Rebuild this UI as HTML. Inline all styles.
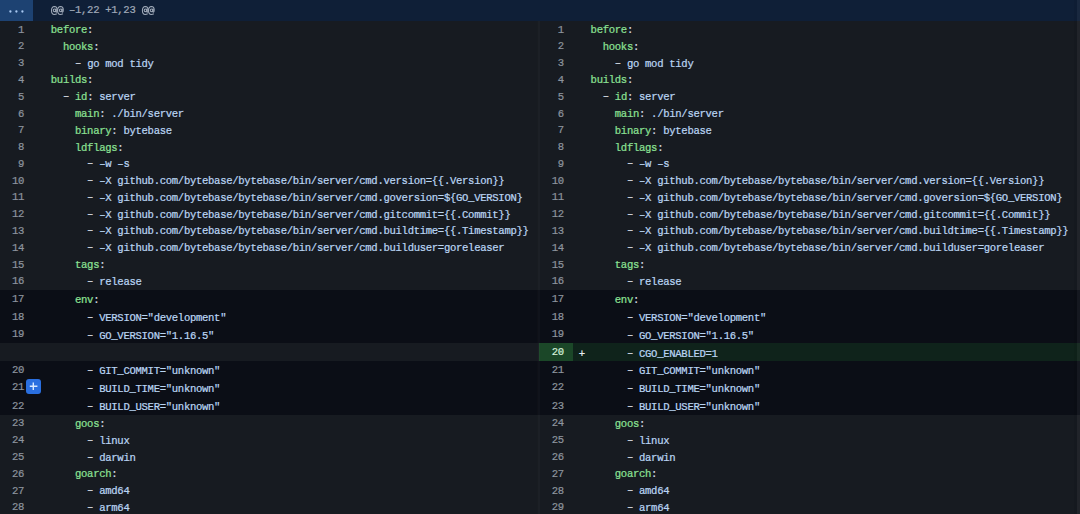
<!DOCTYPE html>
<html><head><meta charset="utf-8"><style>
html,body{margin:0;padding:0;}
body{width:1080px;height:514px;overflow:hidden;position:relative;background:#171b21;font-family:"Liberation Mono",monospace;font-size:10.6px;letter-spacing:-0.31px;-webkit-text-stroke:0.22px;}
.row{position:absolute;left:0;width:1080px;}
.num{position:absolute;text-align:right;color:#8d949e;white-space:pre;transform:scaleY(1.1);}
.addn{color:#d3efd9;}
.code{position:absolute;color:#d5dbe2;white-space:pre;transform:scaleY(1.1);}
.k{color:#8ce194;}
.s{color:#bad5f3;}
.d{color:#d5dbe2;position:relative;top:-0.8px;}
.hunk{position:absolute;left:0;top:0;width:1080px;height:21.0px;background:#0f1f37;}
.exp{position:absolute;left:0;top:0;width:33.2px;height:21.0px;background:#1d4272;}
.divider{position:absolute;left:537px;top:21.0px;width:3.2px;height:600px;background:rgba(255,255,255,0.022);}
.divl{position:absolute;left:536.5px;top:21.0px;width:1px;height:600px;background:rgba(0,0,0,0.12);}
.redge{position:absolute;left:1077px;top:0;width:3px;height:600px;background:rgba(255,255,255,0.045);}
.redge2{position:absolute;left:1074px;top:0;width:3px;height:600px;background:rgba(0,0,0,0.05);}
.plusbtn{position:absolute;left:26.4px;top:379.3px;width:14.6px;height:14.6px;border-radius:3px;background:#2a6fe0;}
</style></head><body>
<div class="row" style="top:21.500px;height:16.780px;background:#171b21"></div><div class="row" style="top:38.280px;height:16.780px;background:#171b21"></div><div class="row" style="top:55.060px;height:16.780px;background:#171b21"></div><div class="row" style="top:71.840px;height:16.780px;background:#171b21"></div><div class="row" style="top:88.620px;height:16.780px;background:#171b21"></div><div class="row" style="top:105.400px;height:16.780px;background:#171b21"></div><div class="row" style="top:122.180px;height:16.780px;background:#171b21"></div><div class="row" style="top:138.960px;height:16.780px;background:#171b21"></div><div class="row" style="top:155.740px;height:16.780px;background:#171b21"></div><div class="row" style="top:172.520px;height:16.780px;background:#171b21"></div><div class="row" style="top:189.300px;height:16.780px;background:#171b21"></div><div class="row" style="top:206.080px;height:16.780px;background:#171b21"></div><div class="row" style="top:222.860px;height:16.780px;background:#171b21"></div><div class="row" style="top:239.640px;height:16.780px;background:#171b21"></div><div class="row" style="top:256.420px;height:16.780px;background:#171b21"></div><div class="row" style="top:273.200px;height:16.780px;background:#171b21"></div><div class="row" style="top:289.980px;height:17.740px;background:#0b0e16"></div><div class="row" style="top:307.720px;height:17.740px;background:#0b0e16"></div><div class="row" style="top:325.460px;height:17.740px;background:#0b0e16"></div><div class="row" style="top:343.200px;height:17.740px;background:#0b0e16"></div><div class="row" style="top:360.940px;height:17.740px;background:#0b0e16"></div><div class="row" style="top:378.680px;height:17.740px;background:#0b0e16"></div><div class="row" style="top:396.420px;height:18.940px;background:#0b0e16"></div><div class="row" style="top:415.360px;height:16.780px;background:#171b21"></div><div class="row" style="top:432.140px;height:16.780px;background:#171b21"></div><div class="row" style="top:448.920px;height:16.780px;background:#171b21"></div><div class="row" style="top:465.700px;height:16.780px;background:#171b21"></div><div class="row" style="top:482.480px;height:16.780px;background:#171b21"></div><div class="row" style="top:499.260px;height:16.780px;background:#171b21"></div><div class="num" style="left:0;width:24.0px;top:21.600px;line-height:16.780px;height:16.780px">1</div><div class="code" style="left:50.8px;top:22.100px;line-height:16.780px;height:16.780px"><span class="k">before</span>:</div><div class="num" style="left:539.8px;width:24.0px;top:21.600px;line-height:16.780px;height:16.780px">1</div><div class="code" style="left:590.5999999999999px;top:22.100px;line-height:16.780px;height:16.780px"><span class="k">before</span>:</div><div class="num" style="left:0;width:24.0px;top:38.380px;line-height:16.780px;height:16.780px">2</div><div class="code" style="left:50.8px;top:38.880px;line-height:16.780px;height:16.780px">  <span class="k">hooks</span>:</div><div class="num" style="left:539.8px;width:24.0px;top:38.380px;line-height:16.780px;height:16.780px">2</div><div class="code" style="left:590.5999999999999px;top:38.880px;line-height:16.780px;height:16.780px">  <span class="k">hooks</span>:</div><div class="num" style="left:0;width:24.0px;top:55.160px;line-height:16.780px;height:16.780px">3</div><div class="code" style="left:50.8px;top:55.660px;line-height:16.780px;height:16.780px">    <span class="d">&#8211;</span> <span class="s">go mod tidy</span></div><div class="num" style="left:539.8px;width:24.0px;top:55.160px;line-height:16.780px;height:16.780px">3</div><div class="code" style="left:590.5999999999999px;top:55.660px;line-height:16.780px;height:16.780px">    <span class="d">&#8211;</span> <span class="s">go mod tidy</span></div><div class="num" style="left:0;width:24.0px;top:71.940px;line-height:16.780px;height:16.780px">4</div><div class="code" style="left:50.8px;top:72.440px;line-height:16.780px;height:16.780px"><span class="k">builds</span>:</div><div class="num" style="left:539.8px;width:24.0px;top:71.940px;line-height:16.780px;height:16.780px">4</div><div class="code" style="left:590.5999999999999px;top:72.440px;line-height:16.780px;height:16.780px"><span class="k">builds</span>:</div><div class="num" style="left:0;width:24.0px;top:88.720px;line-height:16.780px;height:16.780px">5</div><div class="code" style="left:50.8px;top:89.220px;line-height:16.780px;height:16.780px">  <span class="d">&#8211;</span> <span class="k">id</span>: <span class="s">server</span></div><div class="num" style="left:539.8px;width:24.0px;top:88.720px;line-height:16.780px;height:16.780px">5</div><div class="code" style="left:590.5999999999999px;top:89.220px;line-height:16.780px;height:16.780px">  <span class="d">&#8211;</span> <span class="k">id</span>: <span class="s">server</span></div><div class="num" style="left:0;width:24.0px;top:105.500px;line-height:16.780px;height:16.780px">6</div><div class="code" style="left:50.8px;top:106.000px;line-height:16.780px;height:16.780px">    <span class="k">main</span>: <span class="s">./bin/server</span></div><div class="num" style="left:539.8px;width:24.0px;top:105.500px;line-height:16.780px;height:16.780px">6</div><div class="code" style="left:590.5999999999999px;top:106.000px;line-height:16.780px;height:16.780px">    <span class="k">main</span>: <span class="s">./bin/server</span></div><div class="num" style="left:0;width:24.0px;top:122.280px;line-height:16.780px;height:16.780px">7</div><div class="code" style="left:50.8px;top:122.780px;line-height:16.780px;height:16.780px">    <span class="k">binary</span>: <span class="s">bytebase</span></div><div class="num" style="left:539.8px;width:24.0px;top:122.280px;line-height:16.780px;height:16.780px">7</div><div class="code" style="left:590.5999999999999px;top:122.780px;line-height:16.780px;height:16.780px">    <span class="k">binary</span>: <span class="s">bytebase</span></div><div class="num" style="left:0;width:24.0px;top:139.060px;line-height:16.780px;height:16.780px">8</div><div class="code" style="left:50.8px;top:139.560px;line-height:16.780px;height:16.780px">    <span class="k">ldflags</span>:</div><div class="num" style="left:539.8px;width:24.0px;top:139.060px;line-height:16.780px;height:16.780px">8</div><div class="code" style="left:590.5999999999999px;top:139.560px;line-height:16.780px;height:16.780px">    <span class="k">ldflags</span>:</div><div class="num" style="left:0;width:24.0px;top:155.840px;line-height:16.780px;height:16.780px">9</div><div class="code" style="left:50.8px;top:156.340px;line-height:16.780px;height:16.780px">      <span class="d">&#8211;</span> <span class="s">&#8211;w &#8211;s</span></div><div class="num" style="left:539.8px;width:24.0px;top:155.840px;line-height:16.780px;height:16.780px">9</div><div class="code" style="left:590.5999999999999px;top:156.340px;line-height:16.780px;height:16.780px">      <span class="d">&#8211;</span> <span class="s">&#8211;w &#8211;s</span></div><div class="num" style="left:0;width:24.0px;top:172.620px;line-height:16.780px;height:16.780px">10</div><div class="code" style="left:50.8px;top:173.120px;line-height:16.780px;height:16.780px">      <span class="d">&#8211;</span> <span class="s">&#8211;X github.com/bytebase/bytebase/bin/server/cmd.version={{.Version}}</span></div><div class="num" style="left:539.8px;width:24.0px;top:172.620px;line-height:16.780px;height:16.780px">10</div><div class="code" style="left:590.5999999999999px;top:173.120px;line-height:16.780px;height:16.780px">      <span class="d">&#8211;</span> <span class="s">&#8211;X github.com/bytebase/bytebase/bin/server/cmd.version={{.Version}}</span></div><div class="num" style="left:0;width:24.0px;top:189.400px;line-height:16.780px;height:16.780px">11</div><div class="code" style="left:50.8px;top:189.900px;line-height:16.780px;height:16.780px">      <span class="d">&#8211;</span> <span class="s">&#8211;X github.com/bytebase/bytebase/bin/server/cmd.goversion=${GO_VERSION}</span></div><div class="num" style="left:539.8px;width:24.0px;top:189.400px;line-height:16.780px;height:16.780px">11</div><div class="code" style="left:590.5999999999999px;top:189.900px;line-height:16.780px;height:16.780px">      <span class="d">&#8211;</span> <span class="s">&#8211;X github.com/bytebase/bytebase/bin/server/cmd.goversion=${GO_VERSION}</span></div><div class="num" style="left:0;width:24.0px;top:206.180px;line-height:16.780px;height:16.780px">12</div><div class="code" style="left:50.8px;top:206.680px;line-height:16.780px;height:16.780px">      <span class="d">&#8211;</span> <span class="s">&#8211;X github.com/bytebase/bytebase/bin/server/cmd.gitcommit={{.Commit}}</span></div><div class="num" style="left:539.8px;width:24.0px;top:206.180px;line-height:16.780px;height:16.780px">12</div><div class="code" style="left:590.5999999999999px;top:206.680px;line-height:16.780px;height:16.780px">      <span class="d">&#8211;</span> <span class="s">&#8211;X github.com/bytebase/bytebase/bin/server/cmd.gitcommit={{.Commit}}</span></div><div class="num" style="left:0;width:24.0px;top:222.960px;line-height:16.780px;height:16.780px">13</div><div class="code" style="left:50.8px;top:223.460px;line-height:16.780px;height:16.780px">      <span class="d">&#8211;</span> <span class="s">&#8211;X github.com/bytebase/bytebase/bin/server/cmd.buildtime={{.Timestamp}}</span></div><div class="num" style="left:539.8px;width:24.0px;top:222.960px;line-height:16.780px;height:16.780px">13</div><div class="code" style="left:590.5999999999999px;top:223.460px;line-height:16.780px;height:16.780px">      <span class="d">&#8211;</span> <span class="s">&#8211;X github.com/bytebase/bytebase/bin/server/cmd.buildtime={{.Timestamp}}</span></div><div class="num" style="left:0;width:24.0px;top:239.740px;line-height:16.780px;height:16.780px">14</div><div class="code" style="left:50.8px;top:240.240px;line-height:16.780px;height:16.780px">      <span class="d">&#8211;</span> <span class="s">&#8211;X github.com/bytebase/bytebase/bin/server/cmd.builduser=goreleaser</span></div><div class="num" style="left:539.8px;width:24.0px;top:239.740px;line-height:16.780px;height:16.780px">14</div><div class="code" style="left:590.5999999999999px;top:240.240px;line-height:16.780px;height:16.780px">      <span class="d">&#8211;</span> <span class="s">&#8211;X github.com/bytebase/bytebase/bin/server/cmd.builduser=goreleaser</span></div><div class="num" style="left:0;width:24.0px;top:256.520px;line-height:16.780px;height:16.780px">15</div><div class="code" style="left:50.8px;top:257.020px;line-height:16.780px;height:16.780px">    <span class="k">tags</span>:</div><div class="num" style="left:539.8px;width:24.0px;top:256.520px;line-height:16.780px;height:16.780px">15</div><div class="code" style="left:590.5999999999999px;top:257.020px;line-height:16.780px;height:16.780px">    <span class="k">tags</span>:</div><div class="num" style="left:0;width:24.0px;top:273.300px;line-height:16.780px;height:16.780px">16</div><div class="code" style="left:50.8px;top:273.800px;line-height:16.780px;height:16.780px">      <span class="d">&#8211;</span> <span class="s">release</span></div><div class="num" style="left:539.8px;width:24.0px;top:273.300px;line-height:16.780px;height:16.780px">16</div><div class="code" style="left:590.5999999999999px;top:273.800px;line-height:16.780px;height:16.780px">      <span class="d">&#8211;</span> <span class="s">release</span></div><div class="num" style="left:0;width:24.0px;top:290.780px;line-height:17.740px;height:17.740px">17</div><div class="code" style="left:50.8px;top:292.380px;line-height:17.740px;height:17.740px">    <span class="k">env</span>:</div><div class="num" style="left:539.8px;width:24.0px;top:290.780px;line-height:17.740px;height:17.740px">17</div><div class="code" style="left:590.5999999999999px;top:292.380px;line-height:17.740px;height:17.740px">    <span class="k">env</span>:</div><div class="num" style="left:0;width:24.0px;top:308.520px;line-height:17.740px;height:17.740px">18</div><div class="code" style="left:50.8px;top:310.120px;line-height:17.740px;height:17.740px">      <span class="d">&#8211;</span> <span class="s">VERSION=&quot;development&quot;</span></div><div class="num" style="left:539.8px;width:24.0px;top:308.520px;line-height:17.740px;height:17.740px">18</div><div class="code" style="left:590.5999999999999px;top:310.120px;line-height:17.740px;height:17.740px">      <span class="d">&#8211;</span> <span class="s">VERSION=&quot;development&quot;</span></div><div class="num" style="left:0;width:24.0px;top:326.260px;line-height:17.740px;height:17.740px">19</div><div class="code" style="left:50.8px;top:327.860px;line-height:17.740px;height:17.740px">      <span class="d">&#8211;</span> <span class="s">GO_VERSION=&quot;1.16.5&quot;</span></div><div class="num" style="left:539.8px;width:24.0px;top:326.260px;line-height:17.740px;height:17.740px">19</div><div class="code" style="left:590.5999999999999px;top:327.860px;line-height:17.740px;height:17.740px">      <span class="d">&#8211;</span> <span class="s">GO_VERSION=&quot;1.16.5&quot;</span></div><div class="row" style="left:0;width:539.8px;top:343.200px;height:17.740px;background:#171b21"></div><div class="row" style="left:539.3px;width:33.5px;top:343.200px;height:17.740px;background:#1b4728"></div><div class="row" style="left:572.8px;width:507.20000000000005px;top:343.200px;height:17.740px;background:#0f231b"></div><div class="num addn" style="left:539.8px;width:24.0px;top:344.000px;line-height:17.740px;height:17.740px">20</div><div class="code" style="left:590.5999999999999px;top:345.600px;line-height:17.740px;height:17.740px">      <span class="d">&#8211;</span> <span class="s">CGO_ENABLED=1</span></div><div class="code" style="left:578.8px;top:345.600px;line-height:17.740px;height:17.740px;color:#e6edf3">+</div><div class="num" style="left:0;width:24.0px;top:361.740px;line-height:17.740px;height:17.740px">20</div><div class="code" style="left:50.8px;top:363.340px;line-height:17.740px;height:17.740px">      <span class="d">&#8211;</span> <span class="s">GIT_COMMIT=&quot;unknown&quot;</span></div><div class="num" style="left:539.8px;width:24.0px;top:361.740px;line-height:17.740px;height:17.740px">21</div><div class="code" style="left:590.5999999999999px;top:363.340px;line-height:17.740px;height:17.740px">      <span class="d">&#8211;</span> <span class="s">GIT_COMMIT=&quot;unknown&quot;</span></div><div class="num" style="left:0;width:24.0px;top:379.480px;line-height:17.740px;height:17.740px">21</div><div class="code" style="left:50.8px;top:381.080px;line-height:17.740px;height:17.740px">      <span class="d">&#8211;</span> <span class="s">BUILD_TIME=&quot;unknown&quot;</span></div><div class="num" style="left:539.8px;width:24.0px;top:379.480px;line-height:17.740px;height:17.740px">22</div><div class="code" style="left:590.5999999999999px;top:381.080px;line-height:17.740px;height:17.740px">      <span class="d">&#8211;</span> <span class="s">BUILD_TIME=&quot;unknown&quot;</span></div><div class="num" style="left:0;width:24.0px;top:396.620px;line-height:18.940px;height:18.940px">22</div><div class="code" style="left:50.8px;top:398.220px;line-height:18.940px;height:18.940px">      <span class="d">&#8211;</span> <span class="s">BUILD_USER=&quot;unknown&quot;</span></div><div class="num" style="left:539.8px;width:24.0px;top:396.620px;line-height:18.940px;height:18.940px">23</div><div class="code" style="left:590.5999999999999px;top:398.220px;line-height:18.940px;height:18.940px">      <span class="d">&#8211;</span> <span class="s">BUILD_USER=&quot;unknown&quot;</span></div><div class="num" style="left:0;width:24.0px;top:415.460px;line-height:16.780px;height:16.780px">23</div><div class="code" style="left:50.8px;top:415.960px;line-height:16.780px;height:16.780px">    <span class="k">goos</span>:</div><div class="num" style="left:539.8px;width:24.0px;top:415.460px;line-height:16.780px;height:16.780px">24</div><div class="code" style="left:590.5999999999999px;top:415.960px;line-height:16.780px;height:16.780px">    <span class="k">goos</span>:</div><div class="num" style="left:0;width:24.0px;top:432.240px;line-height:16.780px;height:16.780px">24</div><div class="code" style="left:50.8px;top:432.740px;line-height:16.780px;height:16.780px">      <span class="d">&#8211;</span> <span class="s">linux</span></div><div class="num" style="left:539.8px;width:24.0px;top:432.240px;line-height:16.780px;height:16.780px">25</div><div class="code" style="left:590.5999999999999px;top:432.740px;line-height:16.780px;height:16.780px">      <span class="d">&#8211;</span> <span class="s">linux</span></div><div class="num" style="left:0;width:24.0px;top:449.020px;line-height:16.780px;height:16.780px">25</div><div class="code" style="left:50.8px;top:449.520px;line-height:16.780px;height:16.780px">      <span class="d">&#8211;</span> <span class="s">darwin</span></div><div class="num" style="left:539.8px;width:24.0px;top:449.020px;line-height:16.780px;height:16.780px">26</div><div class="code" style="left:590.5999999999999px;top:449.520px;line-height:16.780px;height:16.780px">      <span class="d">&#8211;</span> <span class="s">darwin</span></div><div class="num" style="left:0;width:24.0px;top:465.800px;line-height:16.780px;height:16.780px">26</div><div class="code" style="left:50.8px;top:466.300px;line-height:16.780px;height:16.780px">    <span class="k">goarch</span>:</div><div class="num" style="left:539.8px;width:24.0px;top:465.800px;line-height:16.780px;height:16.780px">27</div><div class="code" style="left:590.5999999999999px;top:466.300px;line-height:16.780px;height:16.780px">    <span class="k">goarch</span>:</div><div class="num" style="left:0;width:24.0px;top:482.580px;line-height:16.780px;height:16.780px">27</div><div class="code" style="left:50.8px;top:483.080px;line-height:16.780px;height:16.780px">      <span class="d">&#8211;</span> <span class="s">amd64</span></div><div class="num" style="left:539.8px;width:24.0px;top:482.580px;line-height:16.780px;height:16.780px">28</div><div class="code" style="left:590.5999999999999px;top:483.080px;line-height:16.780px;height:16.780px">      <span class="d">&#8211;</span> <span class="s">amd64</span></div><div class="num" style="left:0;width:24.0px;top:499.360px;line-height:16.780px;height:16.780px">28</div><div class="code" style="left:50.8px;top:499.860px;line-height:16.780px;height:16.780px">      <span class="d">&#8211;</span> <span class="s">arm64</span></div><div class="num" style="left:539.8px;width:24.0px;top:499.360px;line-height:16.780px;height:16.780px">29</div><div class="code" style="left:590.5999999999999px;top:499.860px;line-height:16.780px;height:16.780px">      <span class="d">&#8211;</span> <span class="s">arm64</span></div>
<div class="hunk"></div>
<div class="exp"><svg width="33" height="21" style="position:absolute;left:0;top:0"><circle cx="10.4" cy="11.5" r="1.15" fill="#a9c9f2"/><circle cx="16.4" cy="11.5" r="1.15" fill="#a9c9f2"/><circle cx="22.4" cy="11.5" r="1.15" fill="#a9c9f2"/></svg></div>
<div class="code" style="left:50.8px;top:0.2px;line-height:21.0px;height:21.0px;color:#a0aab9">   &#8211;1,22 +1,23</div>
<svg width="200" height="21" style="position:absolute;left:0;top:0" fill="none" stroke="#a0aab9" stroke-width="1.05">
<defs><g id="at"><path d="M5.8 8.2Q4.6 8.9 3.3 8.9Q0.5 8.7 0.5 4.8Q0.6 1.1 3.4 0.9Q6.2 0.9 6.2 4.4Q6.2 6.6 5.5 6.6Q4.9 6.6 4.9 5.8V3.2"/><circle cx="3.6" cy="4.7" r="1.35"/></g></defs>
<use href="#at" x="51" y="5.6"/><use href="#at" x="57.1" y="5.6"/>
<use href="#at" x="141.9" y="5.6"/><use href="#at" x="148" y="5.6"/>
</svg>
<div class="divider"></div><div class="divl"></div><div class="redge"></div><div class="redge2"></div>
<div class="plusbtn"><svg width="14.6" height="14.6" style="position:absolute;left:0;top:0"><path d="M3.8 7.3H11.4M7.3 3.6V11" stroke="#d8e8ff" stroke-width="1.4"/></svg></div>
</body></html>
